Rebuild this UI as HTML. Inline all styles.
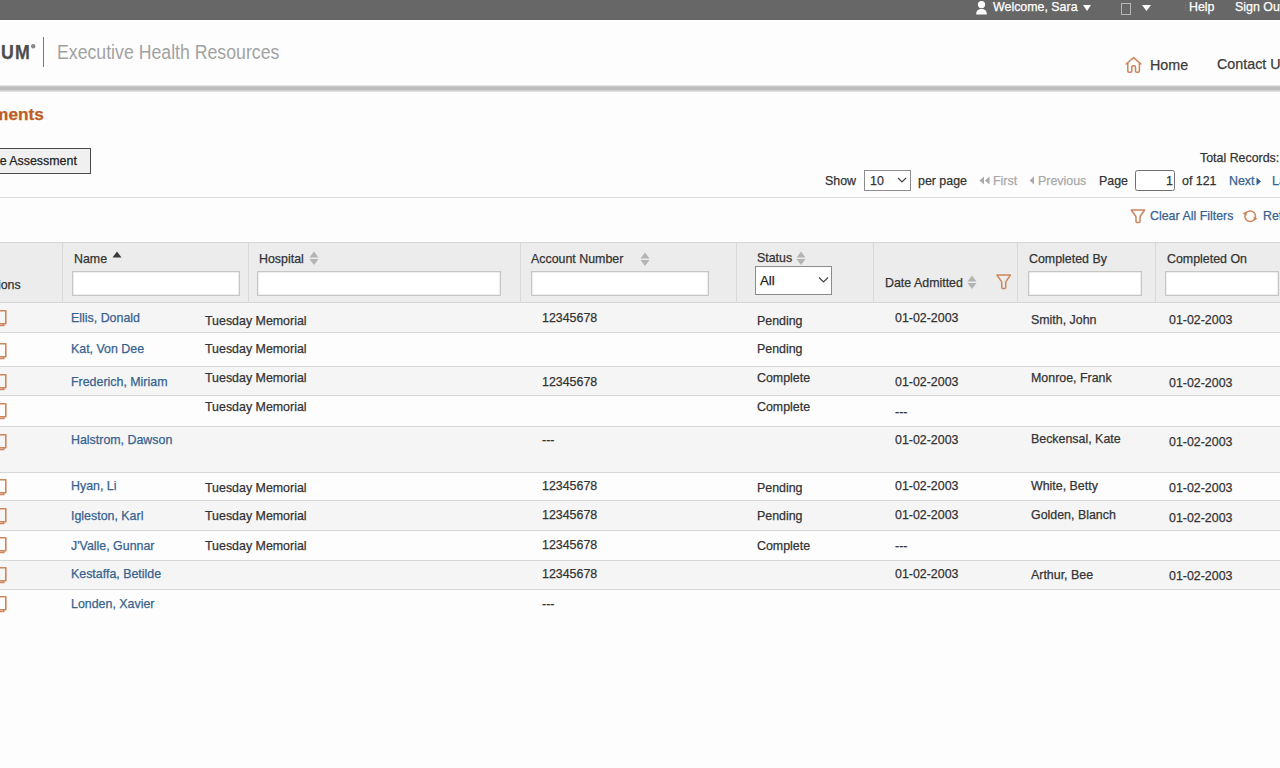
<!DOCTYPE html>
<html><head><meta charset="utf-8"><style>
html,body{margin:0;padding:0;}
body{width:1280px;height:768px;overflow:hidden;position:relative;background:#fdfdfd;font-family:"Liberation Sans", sans-serif;}
.t{position:absolute;white-space:nowrap;-webkit-text-stroke:0.25px currentColor;}
</style></head><body>
<div style="position:absolute;left:0px;top:0px;width:1280px;height:20px;background:#676767"></div>
<svg style="position:absolute;left:975px;top:0px;" width="13" height="16" viewBox="0 0 13 16"><circle cx="6.5" cy="4.6" r="3.6" fill="#fff"/><path d="M1.2 14.6 C1.2 10.6 3.3 9.1 6.5 9.1 C9.7 9.1 11.8 10.6 11.8 14.6 Z" fill="#fff"/></svg>
<div class="t" style="left:993.00px;top:0.00px;font-size:13.0px;line-height:13.0px;color:#ffffff;font-weight:normal;transform:scaleX(0.954);transform-origin:0 0;">Welcome, Sara</div>
<svg style="position:absolute;left:1083px;top:5px;" width="8" height="6" viewBox="0 0 8 6"><path d="M0 0 L8 0 L4 6 Z" fill="#fff"/></svg>
<div style="position:absolute;left:1121px;top:3px;width:8px;height:10px;border:1px solid #b8b8b8"></div>
<svg style="position:absolute;left:1142px;top:5px;" width="9" height="6" viewBox="0 0 9 6"><path d="M0 0 L9 0 L4.5 6 Z" fill="#fff"/></svg>
<div style="position:absolute;left:1185px;top:4px;width:1px;height:7px;background:#8a6a6a"></div>
<div class="t" style="left:1189.00px;top:0.00px;font-size:13.0px;line-height:13.0px;color:#ffffff;font-weight:normal;transform:scaleX(0.954);transform-origin:0 0;">Help</div>
<div class="t" style="left:1235.00px;top:0.00px;font-size:13.0px;line-height:13.0px;color:#ffffff;font-weight:normal;transform:scaleX(0.954);transform-origin:0 0;">Sign Out</div>
<div class="t" style="left:0.90px;top:43.00px;font-size:19.5px;line-height:19.5px;color:#4d4d4d;font-weight:bold;letter-spacing:1.4px;transform:scaleX(0.91);transform-origin:0 0;">UM</div>
<svg style="position:absolute;left:30px;top:43px;" width="6" height="6" viewBox="0 0 6 6"><circle cx="3.2" cy="3.2" r="2.2" fill="#8a8a8a"/></svg>
<div style="position:absolute;left:42.5px;top:37px;width:1.3px;height:30px;background:#777"></div>
<div class="t" style="left:57.00px;top:42.00px;font-size:20px;line-height:20px;color:#a2a2a2;font-weight:normal;transform:scaleX(0.885);transform-origin:0 0;-webkit-text-stroke:0;">Executive Health Resources</div>
<svg style="position:absolute;left:1122px;top:54px;" width="24" height="24" viewBox="0 0 24 24"><path d="M4.2 10 L11.6 3.6 L18.9 10" fill="none" stroke="#cd855b" stroke-width="1.5" stroke-linejoin="round" stroke-linecap="round"/><path d="M5.8 9 V17 Q5.8 18.2 7 18.2 H8.6 Q9.8 18.2 9.8 17 V12.9 Q9.8 11.8 10.9 11.8 H12.4 Q13.5 11.8 13.5 12.9 V17 Q13.5 18.2 14.7 18.2 H16.2 Q17.4 18.2 17.4 17 V9" fill="none" stroke="#cd855b" stroke-width="1.5" stroke-linejoin="round"/></svg>
<div class="t" style="left:1150.00px;top:57.00px;font-size:15px;line-height:15px;color:#3a3a3a;font-weight:normal;transform:scaleX(0.953);transform-origin:0 0;">Home</div>
<div class="t" style="left:1217.00px;top:56.00px;font-size:15px;line-height:15px;color:#3a3a3a;font-weight:normal;transform:scaleX(0.953);transform-origin:0 0;">Contact Us</div>
<div style="position:absolute;left:0px;top:85px;width:1280px;height:7px;background:linear-gradient(#ececec,#bdbdbd 30%,#b9b9b9 60%,#e8e8e8)"></div>
<div class="t" style="left:-67.50px;top:106.00px;font-size:17.3px;line-height:17.3px;color:#bf5d24;font-weight:bold;">Assessments</div>
<div style="position:absolute;left:-20px;top:148px;width:111px;height:26px;background:#f0f0f0;border:1.5px solid #4a4a4a;box-sizing:border-box"></div>
<div class="t" style="left:-30.00px;top:154.00px;font-size:13.0px;line-height:13.0px;color:#222;font-weight:normal;transform:scaleX(0.954);transform-origin:0 0;">Initiate Assessment</div>
<div class="t" style="left:1200.00px;top:151.00px;font-size:13.0px;line-height:13.0px;color:#333333;font-weight:normal;transform:scaleX(0.954);transform-origin:0 0;">Total Records: 1210</div>
<div class="t" style="left:825.00px;top:174.00px;font-size:13.0px;line-height:13.0px;color:#333333;font-weight:normal;transform:scaleX(0.954);transform-origin:0 0;">Show</div>
<div style="position:absolute;left:864px;top:170px;width:47px;height:21px;background:#fff;border:1px solid #8c8c8c;box-sizing:border-box"></div>
<div class="t" style="left:870.00px;top:174.00px;font-size:13.0px;line-height:13.0px;color:#333333;font-weight:normal;transform:scaleX(0.954);transform-origin:0 0;">10</div>
<svg style="position:absolute;left:897px;top:177px;" width="10" height="7" viewBox="0 0 10 7"><path d="M1 1 L5 5 L9 1" fill="none" stroke="#444" stroke-width="1.2"/></svg>
<div class="t" style="left:918.00px;top:174.00px;font-size:13.0px;line-height:13.0px;color:#333333;font-weight:normal;transform:scaleX(0.954);transform-origin:0 0;">per page</div>
<svg style="position:absolute;left:979px;top:175.5px;" width="12" height="9" viewBox="0 0 12 9"><path d="M5 0.5 L0.5 4.5 L5 8.5 Z M10.5 0.5 L6 4.5 L10.5 8.5 Z" fill="#aaa"/></svg>
<div class="t" style="left:993.00px;top:174.00px;font-size:13.0px;line-height:13.0px;color:#a8a8a8;font-weight:normal;transform:scaleX(0.954);transform-origin:0 0;">First</div>
<svg style="position:absolute;left:1029px;top:175.5px;" width="6" height="9" viewBox="0 0 6 9"><path d="M5 0.5 L0.5 4.5 L5 8.5 Z" fill="#aaa"/></svg>
<div class="t" style="left:1038.00px;top:174.00px;font-size:13.0px;line-height:13.0px;color:#a8a8a8;font-weight:normal;transform:scaleX(0.954);transform-origin:0 0;">Previous</div>
<div class="t" style="left:1098.50px;top:174.00px;font-size:13.0px;line-height:13.0px;color:#333333;font-weight:normal;transform:scaleX(0.954);transform-origin:0 0;">Page</div>
<div style="position:absolute;left:1134.8px;top:170px;width:40px;height:20.6px;background:#fff;border:1.4px solid #707070;border-radius:2.5px;box-sizing:border-box"></div>
<div class="t" style="left:1166.00px;top:174.00px;font-size:13.0px;line-height:13.0px;color:#333333;font-weight:normal;transform:scaleX(0.954);transform-origin:0 0;">1</div>
<div class="t" style="left:1182.00px;top:174.00px;font-size:13.0px;line-height:13.0px;color:#333333;font-weight:normal;transform:scaleX(0.954);transform-origin:0 0;">of 121</div>
<div class="t" style="left:1228.50px;top:174.00px;font-size:13.0px;line-height:13.0px;color:#36628f;font-weight:normal;transform:scaleX(0.954);transform-origin:0 0;">Next</div>
<svg style="position:absolute;left:1256px;top:176.5px;" width="6" height="9" viewBox="0 0 6 9"><path d="M0.5 0.5 L5 4.5 L0.5 8.5 Z" fill="#36628f"/></svg>
<div class="t" style="left:1272.00px;top:174.00px;font-size:13.0px;line-height:13.0px;color:#36628f;font-weight:normal;transform:scaleX(0.954);transform-origin:0 0;">Last</div>
<div style="position:absolute;left:0px;top:197px;width:1280px;height:1px;background:#dcdcdc"></div>
<svg style="position:absolute;left:1129px;top:207px;" width="18" height="18" viewBox="0 0 18 18"><path d="M2.2 3 H15.6 L11.4 9 Q11 9.6 11 10.5 V14.6 Q11 15.6 10 15.6 H8 Q7 15.6 7 14.6 V10.5 Q7 9.6 6.6 9 Z" fill="none" stroke="#cd855b" stroke-width="1.5" stroke-linejoin="round"/></svg>
<div class="t" style="left:1150.00px;top:209.00px;font-size:13.0px;line-height:13.0px;color:#36628f;font-weight:normal;transform:scaleX(0.954);transform-origin:0 0;">Clear All Filters</div>
<svg style="position:absolute;left:1242px;top:208px;" width="17" height="17" viewBox="0 0 17 17"><circle cx="8.2" cy="8.3" r="5.3" fill="none" stroke="#cd855b" stroke-width="1.5"/><path d="M0.6 5.6 L4.2 3.6 L4.6 7.8 Z M15.4 10.8 L11.8 12.8 L11.6 8.6 Z" fill="#cd855b"/></svg>
<div class="t" style="left:1263.00px;top:209.00px;font-size:13.0px;line-height:13.0px;color:#36628f;font-weight:normal;transform:scaleX(0.954);transform-origin:0 0;">Refresh</div>
<div style="position:absolute;left:0px;top:242px;width:1280px;height:61px;background:#ececec;border-top:1px solid #d6d6d6;border-bottom:1px solid #d6d6d6;box-sizing:border-box"></div>
<div style="position:absolute;left:62px;top:243px;width:1px;height:59px;background:#d9d9d9"></div>
<div style="position:absolute;left:248px;top:243px;width:1px;height:59px;background:#d9d9d9"></div>
<div style="position:absolute;left:520px;top:243px;width:1px;height:59px;background:#d9d9d9"></div>
<div style="position:absolute;left:736px;top:243px;width:1px;height:59px;background:#d9d9d9"></div>
<div style="position:absolute;left:873px;top:243px;width:1px;height:59px;background:#d9d9d9"></div>
<div style="position:absolute;left:1017px;top:243px;width:1px;height:59px;background:#d9d9d9"></div>
<div style="position:absolute;left:1155px;top:243px;width:1px;height:59px;background:#d9d9d9"></div>
<div class="t" style="left:-20.50px;top:278.00px;font-size:13.0px;line-height:13.0px;color:#333333;font-weight:normal;transform:scaleX(0.954);transform-origin:0 0;">Actions</div>
<div class="t" style="left:73.50px;top:252.00px;font-size:13.0px;line-height:13.0px;color:#333333;font-weight:normal;transform:scaleX(0.954);transform-origin:0 0;">Name</div>
<svg style="position:absolute;left:112px;top:251px;" width="10" height="7" viewBox="0 0 10 7"><path d="M5 0.5 L9.5 6.5 H0.5 Z" fill="#3a3a3a"/></svg>
<div style="position:absolute;left:72px;top:271px;width:168px;height:25px;background:#fff;border:1px solid #c6c6c6;box-shadow:inset 0 0 0 0.5px #ddd;box-sizing:border-box"></div>
<div class="t" style="left:259.00px;top:252.00px;font-size:13.0px;line-height:13.0px;color:#333333;font-weight:normal;transform:scaleX(0.954);transform-origin:0 0;">Hospital</div>
<svg style="position:absolute;left:309px;top:251px;" width="10" height="15" viewBox="0 0 10 15"><path d="M5 0.5 L9.5 6.5 H0.5 Z M0.5 8 H9.5 L5 14 Z" fill="#b4b4b4"/></svg>
<div style="position:absolute;left:257px;top:271px;width:244px;height:25px;background:#fff;border:1px solid #c6c6c6;box-shadow:inset 0 0 0 0.5px #ddd;box-sizing:border-box"></div>
<div class="t" style="left:531.00px;top:252.00px;font-size:13.0px;line-height:13.0px;color:#333333;font-weight:normal;transform:scaleX(0.954);transform-origin:0 0;">Account Number</div>
<svg style="position:absolute;left:640px;top:252px;" width="10" height="15" viewBox="0 0 10 15"><path d="M5 0.5 L9.5 6.5 H0.5 Z M0.5 8 H9.5 L5 14 Z" fill="#b4b4b4"/></svg>
<div style="position:absolute;left:531px;top:271px;width:178px;height:25px;background:#fff;border:1px solid #c6c6c6;box-shadow:inset 0 0 0 0.5px #ddd;box-sizing:border-box"></div>
<div class="t" style="left:756.50px;top:251.00px;font-size:13.0px;line-height:13.0px;color:#333333;font-weight:normal;transform:scaleX(0.954);transform-origin:0 0;">Status</div>
<svg style="position:absolute;left:796px;top:251px;" width="10" height="15" viewBox="0 0 10 15"><path d="M5 0.5 L9.5 6.5 H0.5 Z M0.5 8 H9.5 L5 14 Z" fill="#b4b4b4"/></svg>
<div style="position:absolute;left:755px;top:266px;width:77px;height:29px;background:#fff;border:1.3px solid #8c8c8c;box-sizing:border-box"></div>
<div class="t" style="left:760.00px;top:274.00px;font-size:13.3px;line-height:13.3px;color:#222;font-weight:normal;">All</div>
<svg style="position:absolute;left:818px;top:276px;" width="11" height="8" viewBox="0 0 11 8"><path d="M1 1.5 L5.5 6 L10 1.5" fill="none" stroke="#444" stroke-width="1.2"/></svg>
<div class="t" style="left:884.50px;top:276.00px;font-size:13.0px;line-height:13.0px;color:#333333;font-weight:normal;transform:scaleX(0.954);transform-origin:0 0;">Date Admitted</div>
<svg style="position:absolute;left:967px;top:275px;" width="10" height="15" viewBox="0 0 10 15"><path d="M5 0.5 L9.5 6.5 H0.5 Z M0.5 8 H9.5 L5 14 Z" fill="#b4b4b4"/></svg>
<svg style="position:absolute;left:994px;top:272px;" width="20" height="20" viewBox="0 0 20 20"><path d="M2.9 3.1 H16.4 L12.1 9.4 Q11.7 10 11.7 11 V15.4 Q11.7 16.4 10.7 16.4 H8.8 Q7.8 16.4 7.8 15.4 V11 Q7.8 10 7.4 9.4 Z" fill="none" stroke="#cd855b" stroke-width="1.5" stroke-linejoin="round"/></svg>
<div class="t" style="left:1028.50px;top:252.00px;font-size:13.0px;line-height:13.0px;color:#333333;font-weight:normal;transform:scaleX(0.954);transform-origin:0 0;">Completed By</div>
<div style="position:absolute;left:1028px;top:271px;width:114px;height:25px;background:#fff;border:1px solid #c6c6c6;box-shadow:inset 0 0 0 0.5px #ddd;box-sizing:border-box"></div>
<div class="t" style="left:1166.50px;top:252.00px;font-size:13.0px;line-height:13.0px;color:#333333;font-weight:normal;transform:scaleX(0.954);transform-origin:0 0;">Completed On</div>
<div style="position:absolute;left:1165px;top:271px;width:114px;height:25px;background:#fff;border:1px solid #c6c6c6;box-shadow:inset 0 0 0 0.5px #ddd;box-sizing:border-box"></div>
<div style="position:absolute;left:0px;top:303px;width:1280px;height:29px;background:#f5f5f5"></div>
<div style="position:absolute;left:0px;top:332px;width:1280px;height:34px;background:#fdfdfd"></div>
<div style="position:absolute;left:0px;top:366px;width:1280px;height:29px;background:#f5f5f5"></div>
<div style="position:absolute;left:0px;top:395px;width:1280px;height:31px;background:#fdfdfd"></div>
<div style="position:absolute;left:0px;top:426px;width:1280px;height:46px;background:#f5f5f5"></div>
<div style="position:absolute;left:0px;top:472px;width:1280px;height:28px;background:#fdfdfd"></div>
<div style="position:absolute;left:0px;top:500px;width:1280px;height:30px;background:#f5f5f5"></div>
<div style="position:absolute;left:0px;top:530px;width:1280px;height:30px;background:#fdfdfd"></div>
<div style="position:absolute;left:0px;top:560px;width:1280px;height:29px;background:#f5f5f5"></div>
<div style="position:absolute;left:0px;top:589px;width:1280px;height:51px;background:#fdfdfd"></div>
<div style="position:absolute;left:0px;top:332px;width:1280px;height:1.3px;background:#d7d7d7"></div>
<div style="position:absolute;left:0px;top:366px;width:1280px;height:1.3px;background:#d7d7d7"></div>
<div style="position:absolute;left:0px;top:395px;width:1280px;height:1.3px;background:#d7d7d7"></div>
<div style="position:absolute;left:0px;top:426px;width:1280px;height:1.3px;background:#d7d7d7"></div>
<div style="position:absolute;left:0px;top:472px;width:1280px;height:1.3px;background:#d7d7d7"></div>
<div style="position:absolute;left:0px;top:500px;width:1280px;height:1.3px;background:#d7d7d7"></div>
<div style="position:absolute;left:0px;top:530px;width:1280px;height:1.3px;background:#d7d7d7"></div>
<div style="position:absolute;left:0px;top:560px;width:1280px;height:1.3px;background:#d7d7d7"></div>
<div style="position:absolute;left:0px;top:589px;width:1280px;height:1.3px;background:#d7d7d7"></div>
<svg style="position:absolute;left:-8.7px;top:310px;" width="16" height="17" viewBox="0 0 16 17"><path d="M1 0.8 H14.8 V13.8 H1 Z" fill="none" stroke="#cd855b" stroke-width="1.6" stroke-linejoin="round"/><path d="M1 15.5 H12.8 V14" fill="none" stroke="#cd855b" stroke-width="1.4"/></svg>
<svg style="position:absolute;left:-8.7px;top:343px;" width="16" height="17" viewBox="0 0 16 17"><path d="M1 0.8 H14.8 V13.8 H1 Z" fill="none" stroke="#cd855b" stroke-width="1.6" stroke-linejoin="round"/><path d="M1 15.5 H12.8 V14" fill="none" stroke="#cd855b" stroke-width="1.4"/></svg>
<svg style="position:absolute;left:-8.7px;top:374px;" width="16" height="17" viewBox="0 0 16 17"><path d="M1 0.8 H14.8 V13.8 H1 Z" fill="none" stroke="#cd855b" stroke-width="1.6" stroke-linejoin="round"/><path d="M1 15.5 H12.8 V14" fill="none" stroke="#cd855b" stroke-width="1.4"/></svg>
<svg style="position:absolute;left:-8.7px;top:403px;" width="16" height="17" viewBox="0 0 16 17"><path d="M1 0.8 H14.8 V13.8 H1 Z" fill="none" stroke="#cd855b" stroke-width="1.6" stroke-linejoin="round"/><path d="M1 15.5 H12.8 V14" fill="none" stroke="#cd855b" stroke-width="1.4"/></svg>
<svg style="position:absolute;left:-8.7px;top:434px;" width="16" height="17" viewBox="0 0 16 17"><path d="M1 0.8 H14.8 V13.8 H1 Z" fill="none" stroke="#cd855b" stroke-width="1.6" stroke-linejoin="round"/><path d="M1 15.5 H12.8 V14" fill="none" stroke="#cd855b" stroke-width="1.4"/></svg>
<svg style="position:absolute;left:-8.7px;top:479px;" width="16" height="17" viewBox="0 0 16 17"><path d="M1 0.8 H14.8 V13.8 H1 Z" fill="none" stroke="#cd855b" stroke-width="1.6" stroke-linejoin="round"/><path d="M1 15.5 H12.8 V14" fill="none" stroke="#cd855b" stroke-width="1.4"/></svg>
<svg style="position:absolute;left:-8.7px;top:508px;" width="16" height="17" viewBox="0 0 16 17"><path d="M1 0.8 H14.8 V13.8 H1 Z" fill="none" stroke="#cd855b" stroke-width="1.6" stroke-linejoin="round"/><path d="M1 15.5 H12.8 V14" fill="none" stroke="#cd855b" stroke-width="1.4"/></svg>
<svg style="position:absolute;left:-8.7px;top:537px;" width="16" height="17" viewBox="0 0 16 17"><path d="M1 0.8 H14.8 V13.8 H1 Z" fill="none" stroke="#cd855b" stroke-width="1.6" stroke-linejoin="round"/><path d="M1 15.5 H12.8 V14" fill="none" stroke="#cd855b" stroke-width="1.4"/></svg>
<svg style="position:absolute;left:-8.7px;top:567px;" width="16" height="17" viewBox="0 0 16 17"><path d="M1 0.8 H14.8 V13.8 H1 Z" fill="none" stroke="#cd855b" stroke-width="1.6" stroke-linejoin="round"/><path d="M1 15.5 H12.8 V14" fill="none" stroke="#cd855b" stroke-width="1.4"/></svg>
<svg style="position:absolute;left:-8.7px;top:596px;" width="16" height="17" viewBox="0 0 16 17"><path d="M1 0.8 H14.8 V13.8 H1 Z" fill="none" stroke="#cd855b" stroke-width="1.6" stroke-linejoin="round"/><path d="M1 15.5 H12.8 V14" fill="none" stroke="#cd855b" stroke-width="1.4"/></svg>
<div class="t" style="left:71.30px;top:311.00px;font-size:13.0px;line-height:13.0px;color:#36628f;font-weight:normal;transform:scaleX(0.954);transform-origin:0 0;">Ellis, Donald</div>
<div class="t" style="left:71.30px;top:342.00px;font-size:13.0px;line-height:13.0px;color:#36628f;font-weight:normal;transform:scaleX(0.954);transform-origin:0 0;">Kat, Von Dee</div>
<div class="t" style="left:71.30px;top:375.00px;font-size:13.0px;line-height:13.0px;color:#36628f;font-weight:normal;transform:scaleX(0.954);transform-origin:0 0;">Frederich, Miriam</div>
<div class="t" style="left:71.30px;top:433.00px;font-size:13.0px;line-height:13.0px;color:#36628f;font-weight:normal;transform:scaleX(0.954);transform-origin:0 0;">Halstrom, Dawson</div>
<div class="t" style="left:71.30px;top:479.00px;font-size:13.0px;line-height:13.0px;color:#36628f;font-weight:normal;transform:scaleX(0.954);transform-origin:0 0;">Hyan, Li</div>
<div class="t" style="left:71.30px;top:509.00px;font-size:13.0px;line-height:13.0px;color:#36628f;font-weight:normal;transform:scaleX(0.954);transform-origin:0 0;">Igleston, Karl</div>
<div class="t" style="left:71.30px;top:539.00px;font-size:13.0px;line-height:13.0px;color:#36628f;font-weight:normal;transform:scaleX(0.954);transform-origin:0 0;">J'Valle, Gunnar</div>
<div class="t" style="left:71.30px;top:567.00px;font-size:13.0px;line-height:13.0px;color:#36628f;font-weight:normal;transform:scaleX(0.954);transform-origin:0 0;">Kestaffa, Betilde</div>
<div class="t" style="left:71.30px;top:597.00px;font-size:13.0px;line-height:13.0px;color:#36628f;font-weight:normal;transform:scaleX(0.954);transform-origin:0 0;">Londen, Xavier</div>
<div class="t" style="left:204.50px;top:314.00px;font-size:13.0px;line-height:13.0px;color:#333333;font-weight:normal;transform:scaleX(0.954);transform-origin:0 0;">Tuesday Memorial</div>
<div class="t" style="left:204.50px;top:342.00px;font-size:13.0px;line-height:13.0px;color:#333333;font-weight:normal;transform:scaleX(0.954);transform-origin:0 0;">Tuesday Memorial</div>
<div class="t" style="left:204.50px;top:371.00px;font-size:13.0px;line-height:13.0px;color:#333333;font-weight:normal;transform:scaleX(0.954);transform-origin:0 0;">Tuesday Memorial</div>
<div class="t" style="left:204.50px;top:400.00px;font-size:13.0px;line-height:13.0px;color:#333333;font-weight:normal;transform:scaleX(0.954);transform-origin:0 0;">Tuesday Memorial</div>
<div class="t" style="left:204.50px;top:481.00px;font-size:13.0px;line-height:13.0px;color:#333333;font-weight:normal;transform:scaleX(0.954);transform-origin:0 0;">Tuesday Memorial</div>
<div class="t" style="left:204.50px;top:509.00px;font-size:13.0px;line-height:13.0px;color:#333333;font-weight:normal;transform:scaleX(0.954);transform-origin:0 0;">Tuesday Memorial</div>
<div class="t" style="left:204.50px;top:539.00px;font-size:13.0px;line-height:13.0px;color:#333333;font-weight:normal;transform:scaleX(0.954);transform-origin:0 0;">Tuesday Memorial</div>
<div class="t" style="left:541.80px;top:311.00px;font-size:13.0px;line-height:13.0px;color:#333333;font-weight:normal;transform:scaleX(0.954);transform-origin:0 0;">12345678</div>
<div class="t" style="left:541.80px;top:375.00px;font-size:13.0px;line-height:13.0px;color:#333333;font-weight:normal;transform:scaleX(0.954);transform-origin:0 0;">12345678</div>
<div class="t" style="left:541.80px;top:433.00px;font-size:13.0px;line-height:13.0px;color:#333333;font-weight:normal;transform:scaleX(0.954);transform-origin:0 0;">---</div>
<div class="t" style="left:541.80px;top:479.00px;font-size:13.0px;line-height:13.0px;color:#333333;font-weight:normal;transform:scaleX(0.954);transform-origin:0 0;">12345678</div>
<div class="t" style="left:541.80px;top:508.00px;font-size:13.0px;line-height:13.0px;color:#333333;font-weight:normal;transform:scaleX(0.954);transform-origin:0 0;">12345678</div>
<div class="t" style="left:541.80px;top:538.00px;font-size:13.0px;line-height:13.0px;color:#333333;font-weight:normal;transform:scaleX(0.954);transform-origin:0 0;">12345678</div>
<div class="t" style="left:541.80px;top:567.00px;font-size:13.0px;line-height:13.0px;color:#333333;font-weight:normal;transform:scaleX(0.954);transform-origin:0 0;">12345678</div>
<div class="t" style="left:541.80px;top:597.00px;font-size:13.0px;line-height:13.0px;color:#333333;font-weight:normal;transform:scaleX(0.954);transform-origin:0 0;">---</div>
<div class="t" style="left:757.40px;top:314.00px;font-size:13.0px;line-height:13.0px;color:#333333;font-weight:normal;transform:scaleX(0.954);transform-origin:0 0;">Pending</div>
<div class="t" style="left:757.40px;top:342.00px;font-size:13.0px;line-height:13.0px;color:#333333;font-weight:normal;transform:scaleX(0.954);transform-origin:0 0;">Pending</div>
<div class="t" style="left:757.40px;top:371.00px;font-size:13.0px;line-height:13.0px;color:#333333;font-weight:normal;transform:scaleX(0.954);transform-origin:0 0;">Complete</div>
<div class="t" style="left:757.40px;top:400.00px;font-size:13.0px;line-height:13.0px;color:#333333;font-weight:normal;transform:scaleX(0.954);transform-origin:0 0;">Complete</div>
<div class="t" style="left:757.40px;top:481.00px;font-size:13.0px;line-height:13.0px;color:#333333;font-weight:normal;transform:scaleX(0.954);transform-origin:0 0;">Pending</div>
<div class="t" style="left:757.40px;top:509.00px;font-size:13.0px;line-height:13.0px;color:#333333;font-weight:normal;transform:scaleX(0.954);transform-origin:0 0;">Pending</div>
<div class="t" style="left:757.40px;top:539.00px;font-size:13.0px;line-height:13.0px;color:#333333;font-weight:normal;transform:scaleX(0.954);transform-origin:0 0;">Complete</div>
<div class="t" style="left:894.60px;top:311.00px;font-size:13.0px;line-height:13.0px;color:#333333;font-weight:normal;transform:scaleX(0.954);transform-origin:0 0;">01-02-2003</div>
<div class="t" style="left:894.60px;top:375.00px;font-size:13.0px;line-height:13.0px;color:#333333;font-weight:normal;transform:scaleX(0.954);transform-origin:0 0;">01-02-2003</div>
<div class="t" style="left:894.60px;top:405.00px;font-size:13.0px;line-height:13.0px;color:#333333;font-weight:normal;transform:scaleX(0.954);transform-origin:0 0;">---</div>
<div class="t" style="left:894.60px;top:433.00px;font-size:13.0px;line-height:13.0px;color:#333333;font-weight:normal;transform:scaleX(0.954);transform-origin:0 0;">01-02-2003</div>
<div class="t" style="left:894.60px;top:479.00px;font-size:13.0px;line-height:13.0px;color:#333333;font-weight:normal;transform:scaleX(0.954);transform-origin:0 0;">01-02-2003</div>
<div class="t" style="left:894.60px;top:508.00px;font-size:13.0px;line-height:13.0px;color:#333333;font-weight:normal;transform:scaleX(0.954);transform-origin:0 0;">01-02-2003</div>
<div class="t" style="left:894.60px;top:539.00px;font-size:13.0px;line-height:13.0px;color:#333333;font-weight:normal;transform:scaleX(0.954);transform-origin:0 0;">---</div>
<div class="t" style="left:894.60px;top:567.00px;font-size:13.0px;line-height:13.0px;color:#333333;font-weight:normal;transform:scaleX(0.954);transform-origin:0 0;">01-02-2003</div>
<div class="t" style="left:1030.60px;top:313.00px;font-size:13.0px;line-height:13.0px;color:#333333;font-weight:normal;transform:scaleX(0.954);transform-origin:0 0;">Smith, John</div>
<div class="t" style="left:1030.60px;top:371.00px;font-size:13.0px;line-height:13.0px;color:#333333;font-weight:normal;transform:scaleX(0.954);transform-origin:0 0;">Monroe, Frank</div>
<div class="t" style="left:1030.60px;top:432.00px;font-size:13.0px;line-height:13.0px;color:#333333;font-weight:normal;transform:scaleX(0.954);transform-origin:0 0;">Beckensal, Kate</div>
<div class="t" style="left:1030.60px;top:479.00px;font-size:13.0px;line-height:13.0px;color:#333333;font-weight:normal;transform:scaleX(0.954);transform-origin:0 0;">White, Betty</div>
<div class="t" style="left:1030.60px;top:508.00px;font-size:13.0px;line-height:13.0px;color:#333333;font-weight:normal;transform:scaleX(0.954);transform-origin:0 0;">Golden, Blanch</div>
<div class="t" style="left:1030.60px;top:568.00px;font-size:13.0px;line-height:13.0px;color:#333333;font-weight:normal;transform:scaleX(0.954);transform-origin:0 0;">Arthur, Bee</div>
<div class="t" style="left:1168.50px;top:313.00px;font-size:13.0px;line-height:13.0px;color:#333333;font-weight:normal;transform:scaleX(0.954);transform-origin:0 0;">01-02-2003</div>
<div class="t" style="left:1168.50px;top:376.00px;font-size:13.0px;line-height:13.0px;color:#333333;font-weight:normal;transform:scaleX(0.954);transform-origin:0 0;">01-02-2003</div>
<div class="t" style="left:1168.50px;top:435.00px;font-size:13.0px;line-height:13.0px;color:#333333;font-weight:normal;transform:scaleX(0.954);transform-origin:0 0;">01-02-2003</div>
<div class="t" style="left:1168.50px;top:481.00px;font-size:13.0px;line-height:13.0px;color:#333333;font-weight:normal;transform:scaleX(0.954);transform-origin:0 0;">01-02-2003</div>
<div class="t" style="left:1168.50px;top:511.00px;font-size:13.0px;line-height:13.0px;color:#333333;font-weight:normal;transform:scaleX(0.954);transform-origin:0 0;">01-02-2003</div>
<div class="t" style="left:1168.50px;top:569.00px;font-size:13.0px;line-height:13.0px;color:#333333;font-weight:normal;transform:scaleX(0.954);transform-origin:0 0;">01-02-2003</div>
</body></html>
